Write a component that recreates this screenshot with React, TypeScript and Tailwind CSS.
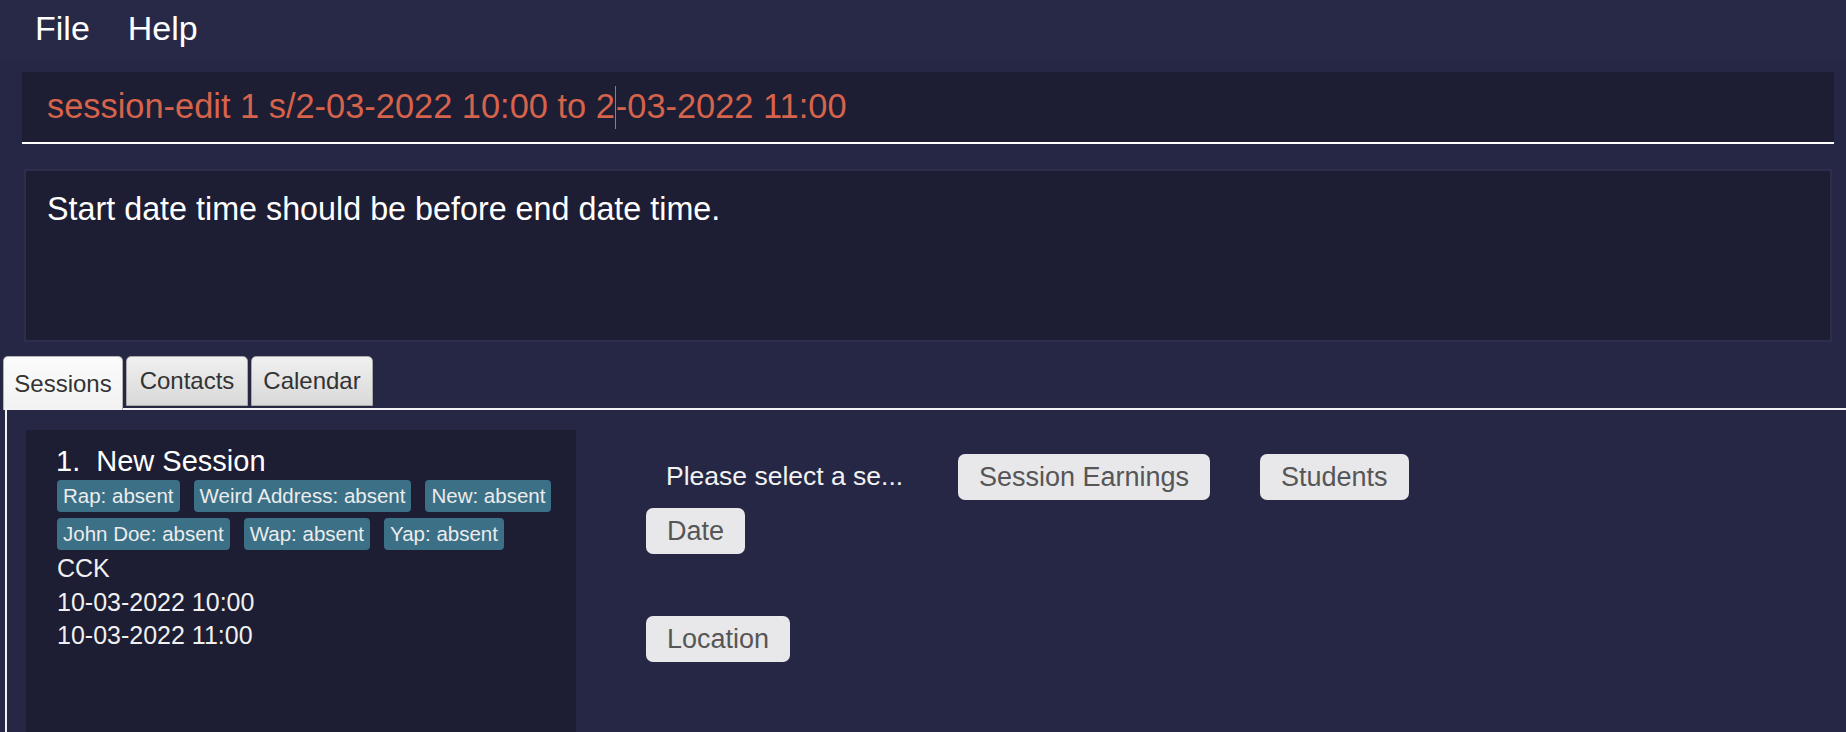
import React from 'react';

const tags = [
  'Rap: absent',
  'Weird Address: absent',
  'New: absent',
  'John Doe: absent',
  'Wap: absent',
  'Yap: absent',
];

const Tab = ({ label, active, width }: { label: string; active?: boolean; width: string }) => (
  <div
    className={
      active
        ? `relative z-10 h-[54px] ${width} flex items-center justify-center rounded-t-[5px] border border-b-0 border-[#b4b4b4] bg-gradient-to-b from-[#fbfbfb] to-[#f2f2f2] text-[24px] text-[#333333]`
        : `h-[50px] ${width} flex items-center justify-center rounded-t-[5px] border border-[#a9a9a9] bg-gradient-to-b from-[#f0f0f0] to-[#d9d9d9] text-[24px] text-[#333333]`
    }
  >
    {label}
  </div>
);

const Button = ({ children }: { children: React.ReactNode }) => (
  <div className="h-[46px] px-[21px] flex items-center rounded-[7px] bg-[#e8e8eb] text-[27px] text-[#565656]">
    {children}
  </div>
);

export default function App() {
  return (
    <div className="w-[1846px] h-[732px] overflow-hidden flex flex-col bg-[#262744] font-['Liberation_Sans',Arial,sans-serif]">
      {/* menu bar */}
      <div className="h-[60px] shrink-0 flex items-center pl-4 pb-1 bg-[#282947] text-[34px] text-white">
        <span className="px-[19px]">File</span>
        <span className="px-[19px]">Help</span>
      </div>

      {/* command box */}
      <div className="mt-3 ml-[22px] mr-3 h-[72px] shrink-0 flex items-center pl-[25px] bg-[#1d1d33] border-b-2 border-white text-[34.4px] text-[#d6634b]">
        <span className="whitespace-pre">session-edit 1 s/2-03-2022 10:00 to 2</span>
        <span className="w-px h-[43px] bg-[#d6634b]" />
        <span className="whitespace-pre">-03-2022 11:00</span>
      </div>

      {/* result display */}
      <div className="mt-[25px] ml-6 mr-[14px] h-[173px] shrink-0 px-[21px] pt-[14px] bg-[#1d1d33] border-2 border-[#2d2e4c] text-[32.3px] text-white">
        Start date time should be before end date time.
      </div>

      {/* tabs */}
      <div className="mt-[14px] h-[52px] shrink-0 flex items-start pl-[3px] gap-[3px]">
        <Tab label="Sessions" active width="w-[120px]" />
        <Tab label="Contacts" width="w-[122px]" />
        <Tab label="Calendar" width="w-[122px]" />
      </div>

      <div className="flex-1 ml-[5px] flex border-t-2 border-l-2 border-[#f2f2f2]">
        {/* session list */}
        <div className="ml-[19px] mt-5 w-[550px] bg-[#1d1d33] pl-[31px] pr-3 pt-[14px] text-white">
          <div className="-ml-px text-[29px] leading-[34px] whitespace-pre">1.  New Session</div>
          <div className="mt-[2px] flex flex-wrap gap-x-[14px] gap-y-[6px]">
            {tags.map((t) => (
              <span
                key={t}
                className="h-[32px] px-[6px] flex items-center rounded-[4px] bg-[#3b7087] text-[20.5px] text-[#ececec]"
              >
                {t}
              </span>
            ))}
          </div>
          <div className="mt-[2px] text-[25px] leading-[33.5px] text-[#f0f0f0]">
            <div>CCK</div>
            <div>10-03-2022 10:00</div>
            <div>10-03-2022 11:00</div>
          </div>
        </div>

        {/* session details */}
        <div className="ml-[70px] mt-[44px] flex flex-col items-start">
          <div className="flex items-center">
            <div className="w-[312px] pl-5 text-[26.5px] text-[#f2f2f2]">Please select a se...</div>
            <div className="w-[302px]">
              <div className="inline-flex">
                <Button>Session Earnings</Button>
              </div>
            </div>
            <Button>Students</Button>
          </div>
          <div className="mt-2">
            <Button>Date</Button>
          </div>
          <div className="mt-[62px]">
            <Button>Location</Button>
          </div>
        </div>
      </div>
    </div>
  );
}
